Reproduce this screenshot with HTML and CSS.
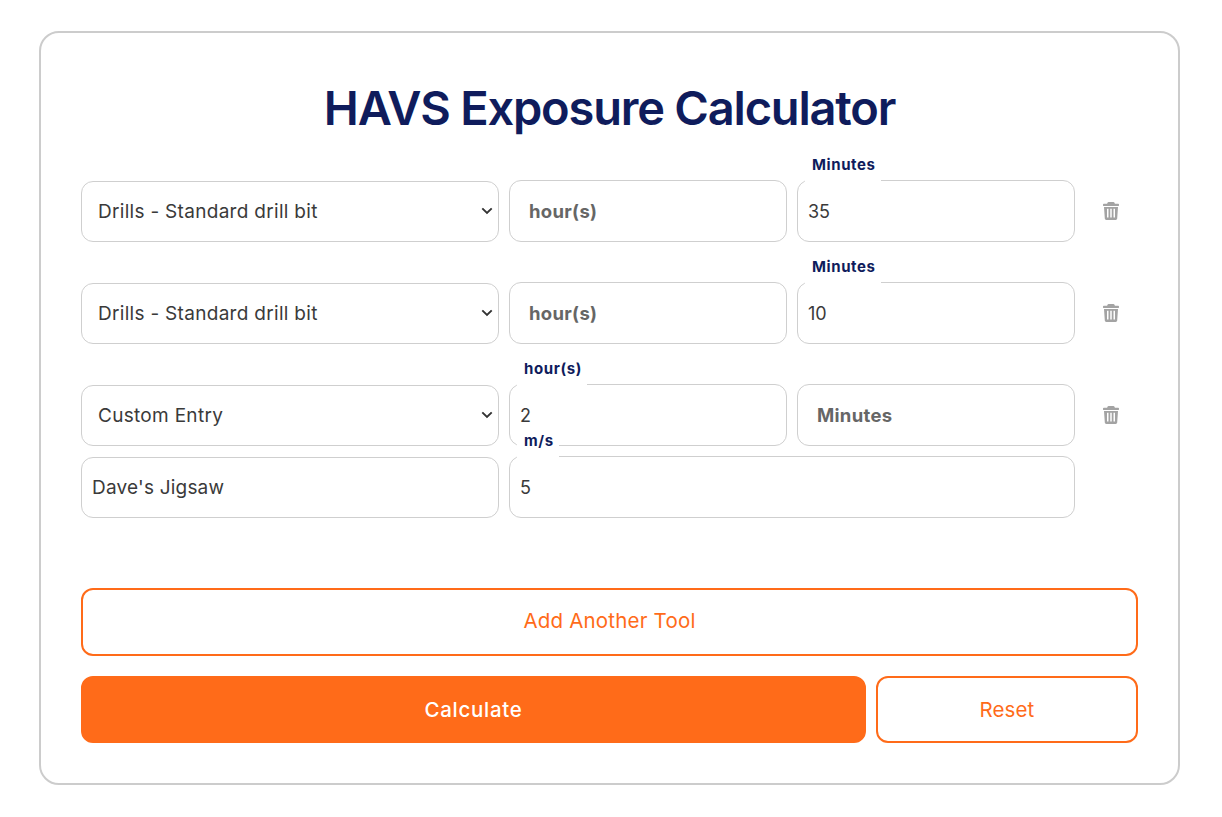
FILE: index.html
```html
<!DOCTYPE html>
<html lang="en">
<head>
<meta charset="utf-8">
<title>HAVS Exposure Calculator</title>
<link rel="stylesheet" href="styles.css">
</head>
<body>
<main class="card">
  <h1 class="title">HAVS Exposure Calculator</h1>
  <form class="tools">
    <div class="tool">
      <select class="control select"><option>Drills - Standard drill bit</option></select>
      <div class="field"><input class="control" type="text"><label class="label label-rest">hour(s)</label></div>
      <div class="field"><input class="control" type="text" value="35"><label class="label label-float">Minutes</label></div>
      <button class="trash" type="button" aria-label="Delete"><svg class="trash-icon" viewBox="0 0 16 18"><use href="#bin"/></svg></button>
    </div>
    <div class="tool">
      <select class="control select"><option>Drills - Standard drill bit</option></select>
      <div class="field"><input class="control" type="text"><label class="label label-rest">hour(s)</label></div>
      <div class="field"><input class="control" type="text" value="10"><label class="label label-float">Minutes</label></div>
      <button class="trash" type="button" aria-label="Delete"><svg class="trash-icon" viewBox="0 0 16 18"><use href="#bin"/></svg></button>
    </div>
    <div class="tool">
      <select class="control select"><option>Custom Entry</option></select>
      <div class="field"><input class="control" type="text" value="2"><label class="label label-float">hour(s)</label></div>
      <div class="field"><input class="control" type="text"><label class="label label-rest">Minutes</label></div>
      <button class="trash" type="button" aria-label="Delete"><svg class="trash-icon" viewBox="0 0 16 18"><use href="#bin"/></svg></button>
      <input class="control select-like" type="text" value="Dave's Jigsaw">
      <div class="field field-wide"><input class="control" type="text" value="5"><label class="label label-float">m/s</label></div>
    </div>
  </form>
  <div class="actions">
    <button class="btn btn-outline btn-full" type="button">Add Another Tool</button>
    <button class="btn btn-solid" type="button">Calculate</button>
    <button class="btn btn-outline" type="button">Reset</button>
  </div>
</main>
<svg class="defs" width="0" height="0" aria-hidden="true">
  <symbol id="bin" viewBox="0 0 16 18">
    <path fill="#a3a3a3" fill-rule="evenodd" d="M5.600 0h4.800c.5 0 .9.3 1.100.7l.4 1h3.300c.4 0 .8.4.8.8v.9c0 .3-.2.5-.5.5H.5C.2 4.100 0 3.900 0 3.600v-1.100c0-.4.4-.8.8-.8h3.300l.4-1C4.700.3 5.100 0 5.600 0zM1 5h14l-.8 11.600c-.1.8-.7 1.400-1.500 1.400H3.300c-.8 0-1.400-.6-1.500-1.400L1 5zm3 1.800v8.600h1.500V6.800zm3.250 0v8.600h1.500V6.800zm3.250 0v8.600H12V6.800z"/>
  </symbol>
</svg>
</body>
</html>
```
FILE: styles.css
```css
* { box-sizing: border-box; }

body {
  margin: 0;
  background: #fff;
  font-family: "Inter", "Noto Sans", sans-serif;
  color: #3a3a3a;
}

.card {
  width: 1141px;
  height: 754px;
  margin: 31px 0 0 39px;
  padding: 40px;
  border: 2px solid #cccccc;
  border-radius: 20px;
}

.title {
  margin: 0 0 45px;
  height: 62px;
  color: #0f1c5c;
  font-family: "Inter", sans-serif;
  font-size: 47px;
  font-weight: 600;
  line-height: 70px;
  letter-spacing: -1.2px;
  text-align: center;
}

.tools {
  display: flex;
  flex-direction: column;
  gap: 40px;
  height: 338px;
}

.tool {
  display: grid;
  grid-template-columns: 418px 278px 278px 1fr;
  grid-auto-rows: 62px;
  gap: 10px;
  align-items: center;
}

.control {
  display: block;
  width: 100%;
  height: 62px;
  padding: 0 10px;
  border: 1px solid #cfcfcf;
  border-radius: 12px;
  background: #fff;
  color: #3a3a3a;
  font-family: "Inter", sans-serif;
  font-size: 18px;
  outline: none;
}

.select {
  appearance: none;
  height: 61px;
  padding-left: 16px;
  padding-right: 24px;
  background: #fff url("data:image/svg+xml,%3Csvg xmlns='http://www.w3.org/2000/svg' width='12' height='8' viewBox='0 0 12 8'%3E%3Cpath d='M1.300 1.300 6 6l4.700-4.700' fill='none' stroke='%23333' stroke-width='1.900'/%3E%3C/svg%3E") no-repeat right 5px center;
  font-size: 19px;
  letter-spacing: 0.3px;
}

.select-like {
  height: 61px;
  margin-top: 1px;
  font-size: 19px;
  letter-spacing: 0.2px;
}

.field {
  position: relative;
  height: 62px;
}

.field-wide {
  grid-column: span 2;
}

.label {
  position: absolute;
  white-space: nowrap;
  font-weight: 700;
}

.label-rest {
  left: 20px;
  top: 0;
  color: #666666;
  font-size: 18.5px;
  line-height: 62px;
  letter-spacing: 0.3px;
}

.label-float {
  left: 8px;
  top: -26px;
  height: 28px;
  padding: 0 5px 0 7px;
  background: #fff;
  color: #0f1c5c;
  font-size: 15px;
  line-height: 22px;
  letter-spacing: 0.6px;
}

.trash {
  justify-self: start;
  display: flex;
  margin: 0 0 0 18px;
  padding: 0;
  border: 0;
  background: none;
}

.trash-icon {
  width: 16px;
  height: 18px;
}

.defs {
  position: absolute;
}

.actions {
  display: grid;
  grid-template-columns: 785px 262px;
  grid-template-rows: 68px 67px;
  gap: 20px 10px;
  margin-top: 70px;
}

.btn {
  border: 2px solid #ff6b19;
  border-radius: 12px;
  font-family: "Inter", sans-serif;
  font-size: 20.5px;
  font-weight: 400;
  letter-spacing: 0.1px;
}

.btn-full {
  grid-column: 1 / -1;
  padding-bottom: 4px;
  letter-spacing: 0.2px;
}

.btn-outline {
  background: #fff;
  color: #ff6b19;
}

.btn-solid {
  background: #ff6b19;
  color: #fff;
  font-weight: 500;
  letter-spacing: 0.7px;
}
```
